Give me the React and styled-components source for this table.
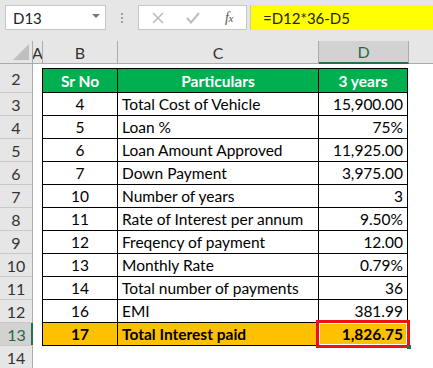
import React from "react";
import styled, { createGlobalStyle } from "styled-components";

const Global = createGlobalStyle`
  html, body { margin: 0; padding: 0; background: #fff; }
  body { font-family: "Lato", "Noto Sans", sans-serif; overflow: hidden; }
`;

const Window = styled.div`
  width: 433px;
  height: 368px;
  overflow: hidden;
  background: #fff;
  display: flex;
  flex-direction: column;
`;

const FormulaBar = styled.div`
  height: 41px;
  flex: none;
  background: #e6e6e6;
  display: flex;
  align-items: flex-start;
  padding: 5px 0 0 5px;
  box-sizing: border-box;
`;

const NameBox = styled.div`
  width: 101px;
  height: 25px;
  box-sizing: border-box;
  background: #fff;
  border: 1px solid #c6c6c6;
  display: flex;
  align-items: center;
  justify-content: space-between;
  padding: 0 5px 0 7px;
  font-size: 15px;
  color: #222;
`;

const Caret = styled.span`
  width: 0;
  height: 0;
  border-left: 4px solid transparent;
  border-right: 4px solid transparent;
  border-top: 4px solid #777;
  margin-top: -3px;
`;

const Dots = styled.div`
  width: 32px;
  height: 25px;
  display: flex;
  flex-direction: column;
  align-items: center;
  justify-content: center;
  gap: 2px;
  span {
    width: 2px;
    height: 2px;
    background: #a0a0a0;
  }
`;

const Buttons = styled.div`
  width: 109px;
  height: 25px;
  box-sizing: border-box;
  background: #fff;
  border: 1px solid #c6c6c6;
  display: flex;
  align-items: center;
  padding-left: 12px;
`;

const IconSlot = styled.div`
  width: ${(p) => p.$w}px;
  margin-left: ${(p) => p.$ml || 0}px;
  height: 25px;
  display: flex;
  align-items: center;
  justify-content: center;
`;

const Fx = styled.span`
  font-family: "Liberation Serif", "DejaVu Serif", serif;
  font-style: italic;
  font-size: 14px;
  color: #555;
  letter-spacing: -0.5px;
  sub { font-size: 11px; vertical-align: baseline; }
`;

const FormulaInput = styled.div`
  flex: 1;
  margin-left: 3px;
  height: 25px;
  box-sizing: border-box;
  background: #ffff00;
  border-left: 1px solid #c6c6c6;
  display: flex;
  align-items: center;
  padding-left: 12px;
  font-size: 15px;
  color: #222;
`;

const ColHeaderRow = styled.div`
  height: 22px;
  flex: none;
  display: flex;
  background: #e6e6e6;
  border-bottom: 1px solid #ababab;
`;

const Corner = styled.div`
  width: 33px;
  flex: none;
  border-right: 1px solid #ababab;
  box-sizing: border-box;
  display: flex;
  align-items: flex-end;
  justify-content: flex-end;
  padding: 0 3px 3px 0;
`;

const ColHead = styled.div`
  width: ${(p) => p.$w}px;
  flex: none;
  box-sizing: border-box;
  border-right: 1px solid #ababab;
  display: flex;
  align-items: center;
  justify-content: center;
  overflow: hidden;
  font-size: 16px;
  color: ${(p) => (p.$sel ? "#1f6b44" : "#333")};
  background: ${(p) => (p.$sel ? "#d2d2d2" : "transparent")};
  border-bottom: ${(p) => (p.$sel ? "2px solid #217346" : "none")};
  margin-bottom: ${(p) => (p.$sel ? "-1px" : "0")};
`;

const Body = styled.div`
  flex: 1;
  display: flex;
`;

const RowHeaders = styled.div`
  width: 33px;
  flex: none;
  background: #e6e6e6;
  border-right: 1px solid #ababab;
  box-sizing: border-box;
  display: flex;
  flex-direction: column;
`;

const RowHead = styled.div`
  height: ${(p) => p.$h}px;
  flex: none;
  border-bottom: 1px solid #c9c9c9;
  display: flex;
  align-items: center;
  justify-content: center;
  font-size: 16px;
  color: ${(p) => (p.$sel ? "#1f6b44" : "#333")};
  background: ${(p) => (p.$sel ? "#d2d2d2" : "transparent")};
  box-shadow: ${(p) => (p.$sel ? "inset -2px 0 0 #217346" : "none")};
  margin-right: ${(p) => (p.$sel ? "-1px" : "0")};
`;

const Sheet = styled.div`
  flex: 1;
  padding: 4px 0 0 9px;
`;

const Table = styled.div`
  display: grid;
  grid-template-columns: 74px 200px 88px;
  grid-template-rows: 23px;
  grid-auto-rows: 22px;
  gap: 1px;
  background: #000;
  border: 1px solid #000;
  width: max-content;
`;

const Row = styled.div`
  display: contents;
`;

const Cell = styled.div`
  position: relative;
  display: flex;
  align-items: center;
  justify-content: ${(p) =>
    p.$align === "right" ? "flex-end" : p.$align === "left" ? "flex-start" : "center"};
  padding: 0 4px;
  font-size: 15.5px;
  white-space: nowrap;
  color: ${(p) => (p.$variant === "head" ? "#fff" : "#000")};
  font-weight: ${(p) => (p.$variant === "data" ? 400 : 700)};
  background: ${(p) =>
    p.$variant === "head" ? "#00b050" : p.$variant === "total" ? "#ffc000" : "#fff"};
`;

const Highlight = styled.div`
  position: absolute;
  left: -3px;
  top: -3px;
  right: -3px;
  bottom: -3px;
  border: 3px solid #ee1111;
  box-shadow: inset 0 0 0 1px #fff;
  pointer-events: none;
`;

const Handle = styled.div`
  position: absolute;
  right: -4px;
  bottom: -4px;
  width: 4px;
  height: 4px;
  background: #217346;
`;

const rows = [
  ["4", "Total Cost of Vehicle", "15,900.00"],
  ["5", "Loan %", "75%"],
  ["6", "Loan Amount Approved", "11,925.00"],
  ["7", "Down Payment", "3,975.00"],
  ["10", "Number of years", "3"],
  ["11", "Rate of Interest per annum", "9.50%"],
  ["12", "Freqency of payment", "12.00"],
  ["13", "Monthly Rate", "0.79%"],
  ["14", "Total number of payments", "36"],
  ["16", "EMI", "381.99"],
];

const rowNums = [3, 4, 5, 6, 7, 8, 9, 10, 11, 12, 13, 14];

export default function App() {
  return (
    <Window>
      <Global />
      <FormulaBar>
        <NameBox>
          D13
          <Caret />
        </NameBox>
        <Dots>
          <span />
          <span />
          <span />
        </Dots>
        <Buttons>
          <IconSlot $w={14}>
            <svg width="12" height="12" viewBox="0 0 12 12">
              <path d="M1 1 L11 11 M11 1 L1 11" stroke="#bdbdbd" strokeWidth="1.6" fill="none" />
            </svg>
          </IconSlot>
          <IconSlot $w={22} $ml={17}>
            <svg width="14" height="12" viewBox="0 0 14 12">
              <path d="M1 6 L5 10.5 L13 1" stroke="#bdbdbd" strokeWidth="2" fill="none" />
            </svg>
          </IconSlot>
          <IconSlot $w={22} $ml={14}>
            <Fx>
              f<sub>x</sub>
            </Fx>
          </IconSlot>
        </Buttons>
        <FormulaInput>=D12*36-D5</FormulaInput>
      </FormulaBar>
      <ColHeaderRow>
        <Corner>
          <svg width="16" height="16" viewBox="0 0 16 16">
            <path d="M16 0 L16 16 L0 16 Z" fill="#bfbfbf" />
          </svg>
        </Corner>
        <ColHead $w={10}>A</ColHead>
        <ColHead $w={75}>B</ColHead>
        <ColHead $w={201}>C</ColHead>
        <ColHead $w={90} $sel>
          D
        </ColHead>
      </ColHeaderRow>
      <Body>
        <RowHeaders>
          <RowHead $h={28}>2</RowHead>
          {rowNums.map((n) => (
            <RowHead key={n} $h={22} $sel={n === 13}>
              {n}
            </RowHead>
          ))}
        </RowHeaders>
        <Sheet>
          <Table>
            <Row>
              <Cell $variant="head">Sr No</Cell>
              <Cell $variant="head">Particulars</Cell>
              <Cell $variant="head">3 years</Cell>
            </Row>
            {rows.map((r) => (
              <Row key={r[0]}>
                <Cell $variant="data">{r[0]}</Cell>
                <Cell $variant="data" $align="left">
                  {r[1]}
                </Cell>
                <Cell $variant="data" $align="right">
                  {r[2]}
                </Cell>
              </Row>
            ))}
            <Row>
              <Cell $variant="total">17</Cell>
              <Cell $variant="total" $align="left">
                Total Interest paid
              </Cell>
              <Cell $variant="total" $align="right">
                1,826.75
                <Highlight />
                <Handle />
              </Cell>
            </Row>
          </Table>
        </Sheet>
      </Body>
    </Window>
  );
}
